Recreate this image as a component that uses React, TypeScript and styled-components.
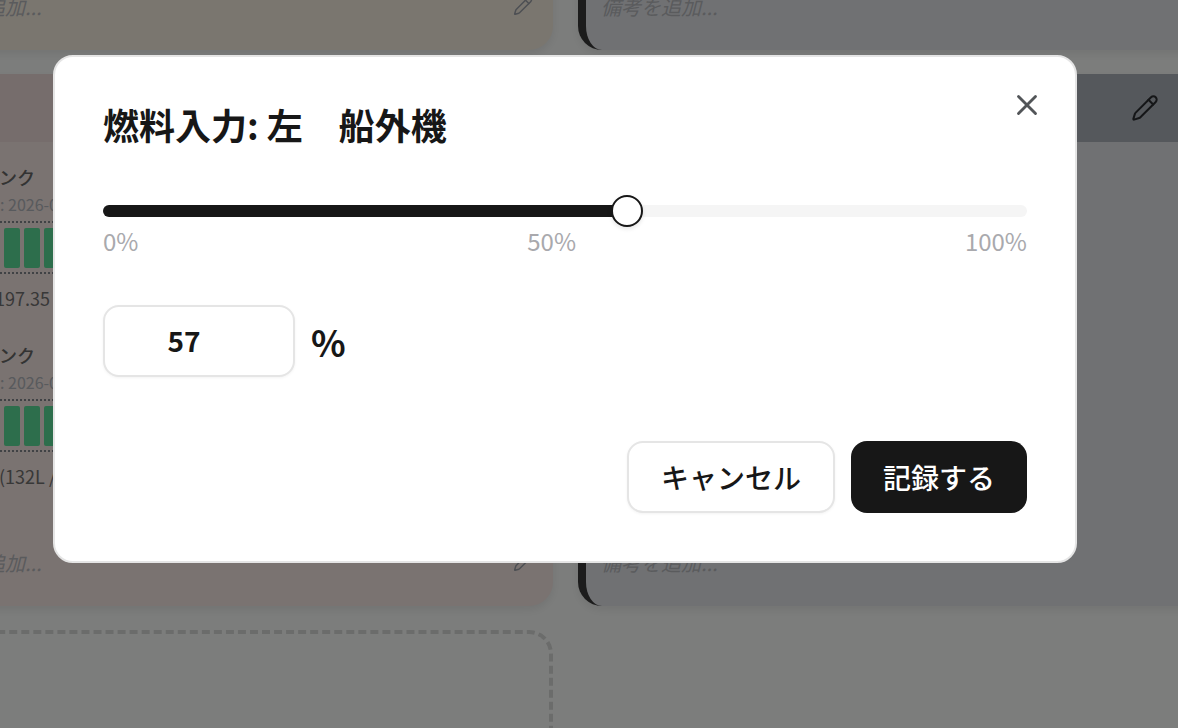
import React from "react";
import styled, { createGlobalStyle } from "styled-components";
import { Pencil, X } from "lucide-react";

const FONT = `"Noto Sans CJK JP", "Noto Sans", sans-serif`;

const Global = createGlobalStyle`
  html, body { margin: 0; padding: 0; height: 100%; overflow: hidden; background: #f9fbf9; }
  body { font-family: ${FONT}; }
  * { box-sizing: border-box; }
`;

const Page = styled.div`
  height: 728px;
  overflow: hidden;
  background: #f9fbf9;
`;

/* The page behind the dialog is scrolled: the grid starts above and left of the viewport */
const CardGrid = styled.div`
  display: grid;
  grid-template-columns: 652px 700px;
  grid-template-rows: 100px 532px 200px;
  column-gap: 25px;
  row-gap: 24px;
  margin: -50px 0 0 -99px;
`;

const Card = styled.section<{ $tone: "sand" | "rose" | "slate" }>`
  display: flex;
  flex-direction: column;
  position: relative;
  overflow: hidden;
  border-radius: 24px;
  background: ${(p) => (p.$tone === "sand" ? "#f4ecdf" : p.$tone === "rose" ? "#f4e6e2" : "#e1e3e7")};
  box-shadow: 0 4px 10px rgba(0, 0, 0, 0.08);
  ${(p) => p.$tone === "slate" && "border-left: 8px solid #383838;"}
`;

const CardHeader = styled.header<{ $tone: "rose" | "slate" }>`
  height: 68px;
  flex: none;
  display: flex;
  align-items: center;
  justify-content: flex-end;
  padding-right: 119px;
  background: ${(p) => (p.$tone === "rose" ? "#ecdad8" : "#aab0b8")};
  color: #2b2d30;
`;

const TankList = styled.div`
  flex: 1;
  display: flex;
  flex-direction: column;
  padding: 20px 24px 0;
`;

const Tank = styled.div`
  height: 178px;
  display: flex;
  flex-direction: column;
`;

const TankName = styled.div`
  height: 30px;
  margin-left: 2px;
  line-height: 30px;
  font-size: 18px;
  font-weight: 500;
  color: #666;
  white-space: nowrap;
`;

const TankDate = styled.div`
  height: 24px;
  margin-left: -5px;
  line-height: 24px;
  font-size: 16px;
  color: #b0b4ba;
  white-space: nowrap;
`;

const Gauge = styled.div`
  display: flex;
  gap: 4px;
  margin-top: 5px;
  height: 53px;
  padding: 5px 0 4px 19px;
  border-top: 2px dotted #80848a;
  border-bottom: 2px dotted #80848a;
`;

const GaugeCell = styled.span`
  width: 16px;
  height: 40px;
  border-radius: 2px;
  background: #5adc98;
`;

const TankAmount = styled.div`
  margin: 9px 0 0 -2px;
  line-height: 30px;
  font-size: 18px;
  color: #707070;
  white-space: nowrap;
`;

const NoteRow = styled.div`
  display: flex;
  align-items: center;
  justify-content: space-between;
  height: 32px;
  padding: 0 20px 0 24px;
  color: #9a9ea6;
`;

const NoteText = styled.span`
  font-size: 20px;
  font-style: italic;
  color: #b4b6ba;
`;

const TopNote = styled(NoteRow)`
  margin-top: 40px;
`;

const BottomNote = styled(NoteRow)`
  position: absolute;
  left: 0;
  right: 0;
  bottom: 28px;
`;

const SlateNote = styled(BottomNote)`
  justify-content: flex-start;
  padding-left: 15px;
`;

const SlateTopNote = styled(TopNote)`
  padding-left: 15px;
`;

const AddCard = styled.div`
  border: 4px dashed #d6d8d6;
  border-radius: 24px;
`;

const Backdrop = styled.div`
  position: fixed;
  inset: 0;
  padding: 55px 0 0 53px;
  background: rgba(0, 0, 0, 0.5);
`;

const Dialog = styled.div`
  position: relative;
  width: 1024px;
  height: 508px;
  padding: 48px;
  background: #fff;
  border: 2px solid #e5e5e5;
  border-radius: 20px;
  color: #171717;
`;

const CloseButton = styled.button`
  position: absolute;
  top: 31px;
  right: 31px;
  width: 34px;
  height: 34px;
  padding: 0;
  display: flex;
  background: none;
  border: 0;
  color: #525558;
`;

const Title = styled.h2`
  margin: 0 0 62px;
  height: 38px;
  line-height: 38px;
  font-size: 36px;
  font-weight: 700;
  white-space: pre;
`;

const Track = styled.div`
  position: relative;
  height: 12px;
  border-radius: 6px;
  background: #f5f5f5;
`;

const Fill = styled.div`
  height: 100%;
  border-radius: 6px;
  background: #171717;
`;

const Thumb = styled.div`
  position: absolute;
  top: 50%;
  width: 32px;
  height: 32px;
  transform: translate(-50%, -50%);
  border: 2px solid #171717;
  border-radius: 50%;
  background: #fff;
  box-shadow: 0 2px 4px rgba(0, 0, 0, 0.1);
`;

const Scale = styled.div`
  display: flex;
  justify-content: space-between;
  height: 32px;
  margin: 8px 0 48px;
  line-height: 32px;
  font-size: 24px;
  color: #a9a9ad;
`;

const ValueRow = styled.div`
  display: flex;
  align-items: center;
  gap: 16px;
`;

const ValueInput = styled.input`
  width: 192px;
  height: 72px;
  padding: 0 30px 2px 0;
  border: 2px solid #e5e5e5;
  border-radius: 16px;
  outline: none;
  background: #fff;
  box-shadow: 0 1px 3px rgba(0, 0, 0, 0.05);
  font-family: ${FONT};
  font-size: 28px;
  font-weight: 700;
  text-align: center;
  color: #171717;
`;

const Unit = styled.span`
  font-size: 36px;
  font-weight: 600;
  color: #171717;
`;

const Actions = styled.div`
  display: flex;
  justify-content: flex-end;
  gap: 16px;
  margin-top: 64px;
`;

const ActionButton = styled.button<{ $primary?: boolean }>`
  height: 72px;
  padding: 0 32px;
  border-radius: 16px;
  border: ${(p) => (p.$primary ? "0" : "2px solid #e5e5e5")};
  background: ${(p) => (p.$primary ? "#171717" : "#fff")};
  color: ${(p) => (p.$primary ? "#fff" : "#171717")};
  box-shadow: ${(p) => (p.$primary ? "none" : "0 1px 3px rgba(0,0,0,.05)")};
  font-family: ${FONT};
  font-size: 28px;
  font-weight: 500;
`;

const tanks = [
  { id: 1, name: "メインタンク", date: "最終記録日: 2026-01-12", amount: "残燃料量197.35 L / 340 L" },
  { id: 2, name: "メインタンク", date: "最終記録日: 2026-01-12", amount: "残燃料量 (132L / 230L)" },
];

const cells = Array.from({ length: 10 }, (_, i) => i);

export default function App() {
  const level = 57;
  return (
    <Page>
      <Global />
      <CardGrid>
        <Card $tone="sand">
          <TopNote>
            <NoteText>備考を追加...</NoteText>
            <Pencil size={20} strokeWidth={1.75} />
          </TopNote>
        </Card>
        <Card $tone="slate">
          <SlateTopNote>
            <NoteText>備考を追加...</NoteText>
          </SlateTopNote>
        </Card>
        <Card $tone="rose">
          <CardHeader $tone="rose" />
          <TankList>
            {tanks.map((t) => (
              <Tank key={t.id}>
                <TankName>{t.name}</TankName>
                <TankDate>{t.date}</TankDate>
                <Gauge>
                  {cells.map((c) => (
                    <GaugeCell key={c} />
                  ))}
                </Gauge>
                <TankAmount>{t.amount}</TankAmount>
              </Tank>
            ))}
          </TankList>
          <BottomNote>
            <NoteText>備考を追加...</NoteText>
            <Pencil size={20} strokeWidth={1.75} />
          </BottomNote>
        </Card>
        <Card $tone="slate">
          <CardHeader $tone="slate">
            <Pencil size={28} strokeWidth={1.75} />
          </CardHeader>
          <SlateNote>
            <NoteText>備考を追加...</NoteText>
          </SlateNote>
        </Card>
        <AddCard />
      </CardGrid>
      <Backdrop>
        <Dialog>
          <CloseButton aria-label="閉じる">
            <X size={34} strokeWidth={2} />
          </CloseButton>
          <Title>燃料入力: 左　船外機</Title>
          <Track>
            <Fill style={{ width: `${level - 0.75}%` }} />
            <Thumb style={{ left: `${(524 / 924) * 100}%` }} />
          </Track>
          <Scale>
            <span>0%</span>
            <span>50%</span>
            <span>100%</span>
          </Scale>
          <ValueRow>
            <ValueInput readOnly value={level} />
            <Unit>%</Unit>
          </ValueRow>
          <Actions>
            <ActionButton>キャンセル</ActionButton>
            <ActionButton $primary>記録する</ActionButton>
          </Actions>
        </Dialog>
      </Backdrop>
    </Page>
  );
}
